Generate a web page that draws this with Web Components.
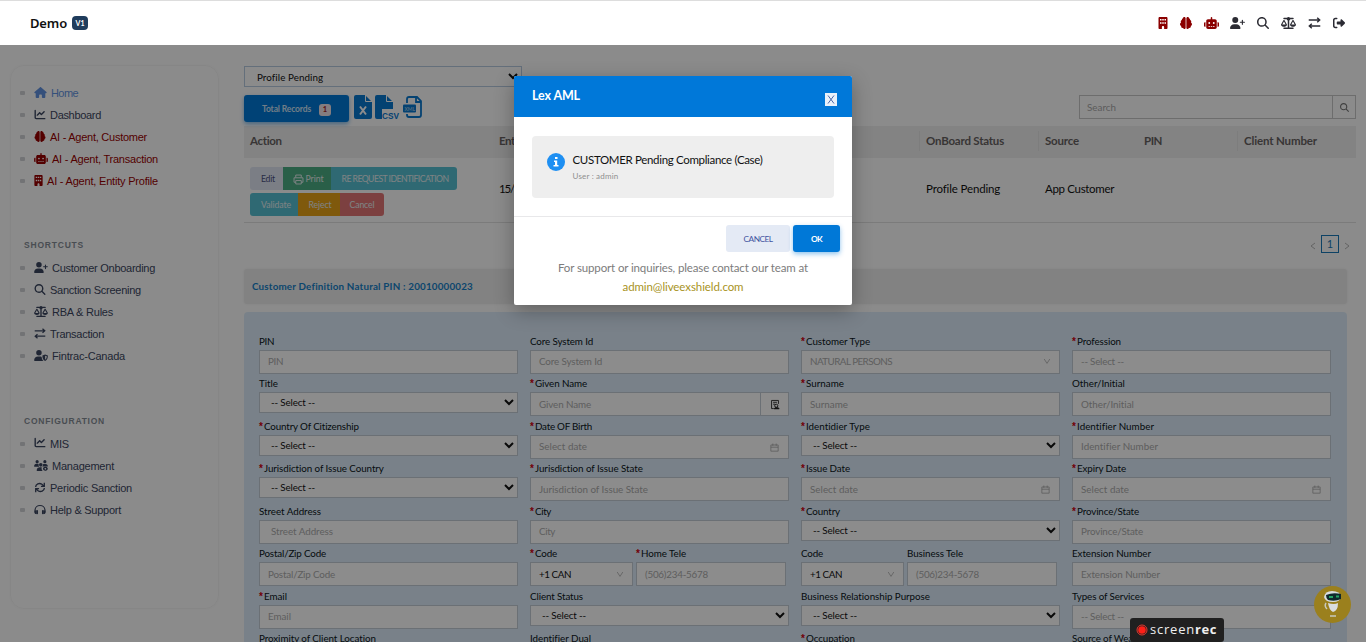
<!DOCTYPE html>
<html lang="en">
<head>
<meta charset="utf-8">
<title>Demo</title>
<style>
  html, body { margin:0; height:642px; overflow:hidden; background:#fff }
  body { font-family:Lato, Carlito, sans-serif; font-size:9.8px; color:#111 }
</style>
</head>
<body>
<aml-app></aml-app>
<script>
const ICONS = {
  home: ['0 0 576 512', '<path d="M576 255.500c0 18-15 32-32 32h-32l.7 160c0 3-.2 6-.5 8v16c0 22-18 40-40 40h-80c-22 0-40-18-40-40v-88c0-18-14-32-32-32h-64c-18 0-32 14-32 32v88c0 22-18 40-40 40h-80c-22 0-40-18-40-40V287.600H32c-18 0-32-14-32-32 0-9 3-17 10-24L266 8c7-7 15-8 22-8s15 2 21 7l256 224.500c8 7 12 15 11 24z"/>'],
  chart: ['0 0 512 512', '<path d="M64 64c0-17.700-14.300-32-32-32S0 46.300 0 64V400c0 44.200 35.800 80 80 80H480c17.700 0 32-14.300 32-32s-14.300-32-32-32H80c-8.800 0-16-7.200-16-16V64zm406.600 86.600c12.500-12.500 12.500-32.800 0-45.300s-32.800-12.500-45.300 0L320 210.700l-57.400-57.400c-12.500-12.500-32.800-12.500-45.300 0l-112 112c-12.500 12.500-12.500 32.800 0 45.300s32.800 12.500 45.300 0L240 221.300l57.400 57.400c12.500 12.500 32.800 12.500 45.300 0l128-128z"/>'],
  brain: ['0 0 512 512', '<path d="M184 0c30.900 0 56 25.100 56 56V456c0 30.900-25.100 56-56 56c-28.900 0-52.700-21.900-55.700-50.100c-5.200 1.400-10.700 2.100-16.300 2.100c-35.300 0-64-28.700-64-64c0-7.400 1.300-14.600 3.600-21.200C21.400 367.400 0 338.200 0 304c0-31.900 18.700-59.500 45.800-72.300C37.100 220.800 32 207 32 192c0-30.700 21.600-56.300 50.400-62.600C80.800 123.900 80 118 80 112c0-29.900 20.600-55.100 48.300-62.100C131.300 21.900 155.100 0 184 0zM328 0c28.900 0 52.600 21.900 55.700 49.900c27.800 7 48.300 32.100 48.300 62.100c0 6-.8 11.900-2.400 17.400c28.800 6.200 50.400 31.900 50.400 62.600c0 15-5.100 28.800-13.800 39.700C493.300 244.500 512 272.100 512 304c0 34.200-21.400 63.400-51.600 74.800c2.300 6.600 3.600 13.800 3.600 21.200c0 35.300-28.700 64-64 64c-5.600 0-11.100-.7-16.300-2.100c-3 28.200-26.800 50.100-55.700 50.100c-30.900 0-56-25.100-56-56V56c0-30.900 25.100-56 56-56z"/>'],
  robot: ['0 0 640 512', '<path fill-rule="evenodd" d="M320 0c17.700 0 32 14.300 32 32V96H472c39.800 0 72 32.200 72 72V440c0 39.800-32.200 72-72 72H168c-39.800 0-72-32.200-72-72V168c0-39.800 32.200-72 72-72H288V32c0-17.700 14.300-32 32-32zM192 384h64v32h-64zM288 384h64v32h-64zM384 384h64v32h-64zM264 256a40 40 0 1 0-80 0 40 40 0 1 0 80 0zm152 40a40 40 0 1 0 0-80 40 40 0 1 0 0 80zM48 224H64V416H48c-26.500 0-48-21.500-48-48V272c0-26.500 21.500-48 48-48zm544 0c26.500 0 48 21.500 48 48v96c0 26.500-21.500 48-48 48H576V224h16z"/>'],
  building: ['0 0 384 512', '<path fill-rule="evenodd" d="M48 0C21.500 0 0 21.500 0 48V464c0 26.500 21.500 48 48 48h96V432c0-26.500 21.500-48 48-48s48 21.500 48 48v80h96c26.500 0 48-21.500 48-48V48c0-26.500-21.500-48-48-48H48zM64 80h64v64H64zM160 80h64v64h-64zM256 80h64v64h-64zM64 224h64v64H64zM160 224h64v64h-64zM256 224h64v64h-64z"/>'],
  userplus: ['0 0 640 512', '<path d="M96 128a128 128 0 1 1 256 0A128 128 0 1 1 96 128zM0 482.300C0 383.800 79.800 304 178.300 304h91.400C368.200 304 448 383.800 448 482.300c0 16.400-13.300 29.700-29.700 29.700H29.700C13.300 512 0 498.700 0 482.300zM504 312V248H440c-13.300 0-24-10.700-24-24s10.700-24 24-24h64V136c0-13.300 10.700-24 24-24s24 10.700 24 24v64h64c13.300 0 24 10.700 24 24s-10.700 24-24 24H552v64c0 13.300-10.700 24-24 24s-24-10.700-24-24z"/>'],
  search: ['0 0 512 512', '<path d="M416 208c0 45.900-14.900 88.300-40 122.700L502.600 457.400c12.500 12.500 12.500 32.800 0 45.300s-32.800 12.500-45.300 0L330.700 376c-34.400 25.200-76.800 40-122.700 40C93.100 416 0 322.900 0 208S93.100 0 208 0S416 93.100 416 208zM208 352a144 144 0 1 0 0-288 144 144 0 1 0 0 288z"/>'],
  scale: ['0 0 640 512', '<path d="M384 32H512c17.700 0 32 14.300 32 32s-14.300 32-32 32H398.400c-5.200 25.800-22.900 47.100-46.400 57.300V448H512c17.700 0 32 14.300 32 32s-14.300 32-32 32H128c-17.700 0-32-14.300-32-32s14.300-32 32-32H288V153.300c-23.500-10.300-41.200-31.600-46.400-57.300H128c-17.700 0-32-14.300-32-32s14.300-32 32-32H256c14.600-19.400 37.800-32 64-32s49.400 12.600 64 32zm55.600 288H584.400L512 195.800 439.600 320zM512 416c-62.900 0-115.200-34-126-78.900c-2.600-11 1-22.300 6.700-32.100l95.200-163.200c5-8.600 14.200-13.800 24.100-13.800s19.100 5.300 24.100 13.800l95.200 163.200c5.700 9.800 9.300 21.100 6.700 32.100C627.200 382 574.900 416 512 416zM126.800 195.800L54.400 320H199.300L126.800 195.800zM.9 337.100c-2.600-11 1-22.300 6.700-32.100l95.200-163.200c5-8.600 14.200-13.800 24.100-13.800s19.100 5.300 24.100 13.800l95.200 163.200c5.700 9.800 9.300 21.100 6.700 32.100C242 382 189.700 416 126.800 416S11.700 382 .9 337.100z"/>'],
  swap: ['0 0 512 512', '<path d="M10 130h466M372 34l106 96-106 96M502 382H36M140 286L34 382l106 96" fill="none" stroke="currentColor" stroke-width="60"/>'],
  exit: ['0 0 512 512', '<path d="M377.900 105.900L500.700 228.700c15 15 15 39.600 0 54.600L377.900 406.100c-6.400 6.400-15 9.900-24 9.900c-18.700 0-33.900-15.200-33.900-33.900V320H192c-17.700 0-32-14.300-32-32v-64c0-17.700 14.300-32 32-32h128v-62.100c0-18.700 15.200-33.900 33.900-33.900c9 0 17.600 3.600 24 9.900zM160 96H96c-17.700 0-32 14.300-32 32v256c0 17.700 14.300 32 32 32h64c17.700 0 32 14.300 32 32s-14.300 32-32 32H96c-53 0-96-43-96-96V128C0 75 43 32 96 32h64c17.700 0 32 14.300 32 32s-14.300 32-32 32z"/>'],
  shield: ['0 0 640 512', '<path d="M96 128a128 128 0 1 1 256 0A128 128 0 1 1 96 128zM0 482C0 384 80 304 178 304h92c30 0 58 7 82 20 2 72 34 136 84 188H30c-17 0-30-13-30-30z"/><path fill-rule="evenodd" d="M512 208l128 50c0 110-24 200-128 254-104-54-128-144-128-254zM512 262v192c56-38 76-90 78-162z"/>'],
  team: ['0 0 640 512', '<circle cx="140" cy="76" r="74"/><circle cx="500" cy="76" r="74"/><circle cx="310" cy="226" r="84"/><path d="M0 300c0-70 40-122 104-122h54c20 0 38 6 54 16-10 46 0 86 28 118H12zM420 190h116c62 0 104 50 104 118H376c32-34 48-70 44-118zM120 484c0-88 64-146 150-146h88c-22 60-8 124 42 174H150c-18 0-30-12-30-28z"/><path fill-rule="evenodd" d="M494 324l28-24 30 24 38-8 12 38 36 14-8 36 8 36-36 16-12 36-38-8-30 26-28-26-38 8-12-36-36-16 10-36-10-36 36-14 12-38zM522 368a36 36 0 1 0 .1 0z"/>'],
  rotate: ['0 0 512 512', '<path d="M52 236C58 100 220 20 346 104l80 76M460 276c-6 136-168 216-294 132l-80-76M456 40v160H300M56 472V312h156" fill="none" stroke="currentColor" stroke-width="62"/>'],
  phones: ['0 0 512 512', '<path d="M28 400V276C28 0 484 0 484 276v124" fill="none" stroke="currentColor" stroke-width="54"/><rect x="76" y="284" width="88" height="196" rx="36"/><rect x="348" y="284" width="88" height="196" rx="36"/><path d="M0 300l76 6v160C20 456 0 420 0 390zM512 300l-76 6v160c56-10 76-46 76-76z"/>'],
  printer: ['0 0 16 16', '<path d="M4 5V1.500h8V5M4 12H1.500V5.500h13V12H12M4 9.500h8v5H4z" fill="none" stroke="currentColor" stroke-width="1.400"/>'],
  calendar: ['0 0 16 16', '<path d="M1.500 3.500h13v11h-13zM1.500 7.500h13M5 1v4M11 1v4" fill="none" stroke="currentColor" stroke-width="1.200"/>'],
  lookup: ['0 0 16 16', '<path d="M6 14.500H2.500v-13h11V7M5 4.500h6M5 7.500h3" fill="none" stroke="currentColor" stroke-width="1.400"/><circle cx="10" cy="10" r="2.500" fill="none" stroke="currentColor" stroke-width="1.500"/><path d="M6.500 15c1-3 6-3 8 0zM12 12l3 3" stroke="currentColor"/>'],
  down: ['0 0 10 10', '<path d="M1.500 2.500L5 8l3.500-5.500" fill="none" stroke="currentColor"/>'],
  caret: ['0 0 10 10', '<path d="M1 3l4 4 4-4" fill="none" stroke="currentColor" stroke-width="2"/>']
}

customElements.define('aml-icon', class extends HTMLElement {
  connectedCallback() {
    const [box, body] = ICONS[this.getAttribute('name')]
    const w = this.getAttribute('w') || 12
    const h = this.getAttribute('h') || 12
    this.attachShadow({ mode: 'open' }).innerHTML = `
    <style>
      :host{display:inline-flex;flex:none}
      svg{display:block;fill:currentColor}
    </style>
    <svg width='${w}' height='${h}' viewBox='${box}'>${body}</svg>`
  }
})

// one line of text, tracked so that it runs over w pixels
customElements.define('aml-text', class extends HTMLElement {
  connectedCallback() {
    this.attachShadow({ mode: 'open' }).innerHTML =
      `<style>:host{display:inline-block;white-space:nowrap;flex:none}</style><span><slot></slot></span>`
    const w = +this.getAttribute('w')
    if (!w) return
    const own = this.shadowRoot.querySelector('span').getBoundingClientRect().width
    this.style.letterSpacing = (w - own) / this.textContent.length + 'px'
  }
})

customElements.define('aml-topbar', class extends HTMLElement {
  connectedCallback() {
    const icons = [['building', 10, 12, 6], ['brain', 12, 12, 12], ['robot', 15, 12, 12], ['userplus', 15, 12, 12],
      ['search', 12, 12, 12], ['scale', 15, 12, 12], ['swap', 13, 12, 12], ['exit', 12, 12, 11]]
    this.attachShadow({ mode: 'open' }).innerHTML = `
    <style>
      :host{
        display:flex;
        align-items:center;
        box-sizing:border-box;
        height:45px;
        padding:0 21px 1px 30px;
        border-top:1px solid #ddd;
        background:#fff;
        color:#2b2b33;
      }
      .name{font:600 13px "Noto Sans",sans-serif;color:#111}
      .tag{
        width:16px;height:14px;margin-left:5px;border-radius:4px;
        background:#1f3c5c;color:#fff;
        font:bold 7px/14px Lato,sans-serif;text-align:center;
      }
      nav{display:flex;align-items:center;margin-left:auto;gap:11.900px}
      nav aml-icon:nth-child(-n+3){color:#8b0000}
    </style>
    <aml-text class='name' w='37'>Demo</aml-text><span class='tag'>V1</span>
    <nav>${icons.map(([n, w, h]) => `<aml-icon name='${n}' w='${w}' h='${h}'></aml-icon>`).join('')}</nav>`
  }
})

customElements.define('aml-link', class extends HTMLElement {
  connectedCallback() {
    const wide = this.getAttribute('iw') || 12
    this.attachShadow({ mode: 'open' }).innerHTML = `
    <style>
      :host{display:flex;align-items:center;height:22.100px;padding-left:9px;color:#3b4660}
      :host([red]){color:#980000}
      :host([blue]){color:#6292e0}
      i{width:5px;height:4px;border-radius:1px;background:#d0d2d6;margin-right:9px}
      aml-icon{margin-right:4px;position:relative;top:-1px}
    </style>
    <i></i><aml-icon name='${this.getAttribute('icon')}' w='${wide}' h='${this.getAttribute('ih') || 11}'></aml-icon>
    <aml-text w='${this.getAttribute('w')}'>${this.textContent}</aml-text>`
  }
})

customElements.define('aml-sidebar', class extends HTMLElement {
  connectedCallback() {
    this.attachShadow({ mode: 'open' }).innerHTML = `
    <style>
      :host{
        display:block;box-sizing:border-box;
        width:209px;height:544px;margin:20px 0 0 10px;padding-top:16px;
        border:1px solid #f5f5f5;border-radius:14px;
        box-shadow:0 0 3px rgba(0,0,0,.04);
        font:11px "Liberation Sans",Arial,sans-serif;
        flex:none;
      }
      h4{
        height:12px;margin:46.500px 0 6px 13px;
        font-size:8.500px;line-height:12px;font-weight:bold;color:#868d96;
      }
      h4.second{margin-top:47.500px}
    </style>
    <aml-link icon='home' iw='13' w='27' blue>Home</aml-link>
    <aml-link icon='chart' w='51'>Dashboard</aml-link>
    <aml-link icon='brain' w='97' red>AI - Agent, Customer</aml-link>
    <aml-link icon='robot' iw='14' w='106' red>AI - Agent, Transaction</aml-link>
    <aml-link icon='building' iw='9' w='111' red>AI - Agent, Entity Profile</aml-link>
    <h4><aml-text w='60'>SHORTCUTS</aml-text></h4>
    <aml-link icon='userplus' iw='14' w='103'>Customer Onboarding</aml-link>
    <aml-link icon='search' w='91'>Sanction Screening</aml-link>
    <aml-link icon='scale' iw='14' w='61'>RBA &amp; Rules</aml-link>
    <aml-link icon='swap' w='54'>Transaction</aml-link>
    <aml-link icon='shield' iw='14' w='73'>Fintrac-Canada</aml-link>
    <h4 class='second'><aml-text w='81'>CONFIGURATION</aml-text></h4>
    <aml-link icon='chart' w='19'>MIS</aml-link>
    <aml-link icon='team' iw='14' w='62'>Management</aml-link>
    <aml-link icon='rotate' w='82'>Periodic Sanction</aml-link>
    <aml-link icon='phones' w='71'>Help &amp; Support</aml-link>`
  }
})

customElements.define('aml-records', class extends HTMLElement {
  connectedCallback() {
    this.attachShadow({ mode: 'open' }).innerHTML = `
    <style>
      :host{display:block;width:1112px;height:203px}
      *{box-sizing:border-box}
      .status{
        display:flex;align-items:center;justify-content:space-between;
        width:278px;height:21px;padding:0 3px 0 12px;
        border:1px solid #b6cbe0;color:#111;
      }
      .status aml-icon{margin-bottom:2px}
      .tools{display:flex;align-items:flex-start;height:31px;margin-top:8px}
      .total{
        display:flex;align-items:center;width:105px;height:27px;padding-left:18px;
        border-radius:3px;background:#0078d7;color:#cfe3f5;font-weight:bold;
        box-shadow:0 2px 4px rgba(0,120,215,.5);margin-right:5px;font-size:8.500px;
      }
      .total b{
        width:12px;height:12px;margin:2px 0 0 8px;border-radius:3px;text-align:center;
        background:#f3e4e8;color:#a32b2b;font-size:7.500px;line-height:12px;
      }
      .files{display:block}
      .search{display:flex;width:277px;height:24px;margin-left:auto;border:1px solid #c6c6c6;color:#a8a8a8;align-items:center}
      .search aml-text{padding:0 0 1px 7px}
      .search div{
        display:flex;align-items:center;justify-content:center;width:23px;height:22px;
        margin-left:auto;border-left:1px solid #c6c6c6;color:#777;
      }
      .row{display:grid;grid-template-columns:249px 426px 119px 99px 100px 1fr;align-items:center;font-size:11.500px}
      .row > *{padding-left:6px}
      .head{height:32px;padding-bottom:3px;background:#efefef;font-weight:bold;color:#676262}
      .sep{height:20px;border-left:1px solid #e4e4e4;display:flex;align-items:center}
      .body{height:65px;border-bottom:1px solid #e0e0e0;color:#111}
      .body > span{padding-bottom:4px}
      .actions{display:grid;gap:3px;padding-top:2px}
      .group{display:flex;height:23px;font-size:8.700px;color:#e6eef0}
      .group span{display:flex;align-items:center;justify-content:center;gap:2px;background:#57c0d2}
      .group span:first-child{border-radius:3px 0 0 3px}
      .group span:last-child{border-radius:0 3px 3px 0}
      .group .edit{background:#e0e6f3;color:#4a5080}
      .group .print{background:#4cad83}
      .group .print aml-icon{position:relative;top:1px}
      .group .reject{background:#e8a317}
      .group .cancel{background:#e27676}
      .pages{
        display:flex;justify-content:flex-end;align-items:center;gap:5px;
        height:43px;padding:0 6px 2px 0;color:#b5b5b5;
      }
      .pages svg{position:relative;top:2px}
      .pages b{
        width:18px;height:18px;border:1px solid #1878b8;
        color:#1878b8;text-align:center;font-size:11px;line-height:16px;font-weight:normal;
      }
    </style>
    <div class='status'><aml-text w='66'>Profile Pending</aml-text><aml-icon name='caret' w='10' h='10'></aml-icon></div>
    <div class='tools'>
      <div class='total'><aml-text w='49'>Total Records</aml-text><b>1</b></div>
      <svg class='files' width='70' height='26' viewBox='0 0 70 26'>
        <g fill='#0878d0'>
          <path d='M2 0h9l7 7v15q0 2-2 2H2q-2 0-2-2V2q0-2 2-2z'/>
          <path d='M23 0h9l7 7v7H28v10h-5q-2 0-2-2V2q0-2 2-2z'/>
        </g>
        <path d='M11.500 0v6.500H18M32.500 0v6.500H39' fill='none' stroke='#fff'/>
        <path d='M6 11.500l6 8M12 11.500l-6 8' stroke='#fff' stroke-width='2'/>
        <text x='28' y='24' font-family='Liberation Sans' font-size='9' font-weight='bold' fill='#0878d0' textLength='17' lengthAdjust='spacingAndGlyphs'>CSV</text>
        <path d='M53 8V4q0-2 2-2h8l4 4v14q0 2-2 2H55q-2 0-2-2v-1M62 2v5h5' fill='none' stroke='#0878d0' stroke-width='1.800'/>
        <rect x='49' y='9.500' width='13' height='8' rx='1' fill='#0878d0'/>
        <text x='50.500' y='15.500' font-family='Lato' font-size='5' font-weight='bold' fill='#9cc4e4'>XML</text>
      </svg>
      <div class='search'><aml-text w='29'>Search</aml-text><div><aml-icon name='search' w='9' h='9'></aml-icon></div></div>
    </div>
    <div class='row head'>
      <span><aml-text w='32'>Action</aml-text></span><span><aml-text w='16'>Ent</aml-text></span>
      <div class='sep'><aml-text w='78'>OnBoard Status</aml-text></div>
      <div class='sep'><aml-text w='34'>Source</aml-text></div>
      <span style='padding-left:7px'><aml-text w='18'>PIN</aml-text></span>
      <div class='sep'><aml-text w='73'>Client Number</aml-text></div>
    </div>
    <div class='row body'>
      <div class='actions'>
        <div class='group'>
          <span class='edit' style='width:33px;padding-left:3px'><aml-text w='14'>Edit</aml-text></span>
          <span class='print' style='width:48px;padding-left:2px'><aml-icon name='printer' w='11' h='11'></aml-icon><aml-text w='18'>Print</aml-text></span>
          <span style='width:126px;padding-left:2px'><aml-text w='107'>RE REQUEST IDENTIFICATION</aml-text></span>
        </div>
        <div class='group'>
          <span style='width:48px;padding-left:4px'><aml-text w='30'>Validate</aml-text></span>
          <span class='reject' style='width:42px;padding-left:2px'><aml-text w='23'>Reject</aml-text></span>
          <span class='cancel' style='width:44px'><aml-text w='25'>Cancel</aml-text></span>
        </div>
      </div>
      <span><aml-text w='15'>15/</aml-text></span>
      <span style='padding-left:7px'><aml-text w='74'>Profile Pending</aml-text></span>
      <span style='padding-left:7px'><aml-text w='69'>App Customer</aml-text></span>
    </div>
    <div class='pages'>
      <svg width='6' height='8'><path d='M5 1L1 4l4 3' fill='none' stroke='#b5b5b5'/></svg><b>1</b><svg width='6' height='8'><path d='M1 1l4 3-4 3' fill='none' stroke='#b5b5b5'/></svg>
    </div>`
  }
})

// kind: input, select (native look), combo (thin arrow), date, lookup
customElements.define('aml-field', class extends HTMLElement {
  connectedCallback() {
    const kind = this.getAttribute('kind') || 'input'
    const icon = {
      select: `<aml-icon name='caret' w='10' h='10'></aml-icon>`,
      combo: `<aml-icon name='down' w='8' h='8'></aml-icon>`,
      date: `<aml-icon name='calendar' w='9' h='9'></aml-icon>`,
      lookup: `<div><aml-icon name='lookup' w='10' h='11'></aml-icon></div>`
    }[kind] || ''
    this.attachShadow({ mode: 'open' }).innerHTML = `
    <style>
      :host{display:block;height:42.500px}
      *{box-sizing:border-box}
      label{display:flex;height:18px;line-height:18px;color:#0b1420}
      sup{width:5px;height:18px;font:bold 10px/20px "Liberation Sans",sans-serif;color:#d00010}
      .box{
        display:flex;align-items:center;height:24px;padding:0 0 1px 8px;
        border:1px solid #c3cdd6;background:#fff;color:#acacac;
      }
      .box > aml-icon{margin-left:auto;margin-right:8px}
      .select{height:21px;padding-left:11px;color:#111}
      .select > aml-icon{margin-right:3px}
      .date > aml-icon{margin-right:9px;color:#999;position:relative;top:1px}
      :host([dark]) .box aml-text{color:#111}
      .box div{
        display:flex;align-items:center;justify-content:center;width:28px;height:22px;
        margin-left:auto;border-left:1px solid #c3cdd6;color:#222;position:relative;top:.5px;
      }
    </style>
    <label>${this.hasAttribute('req') ? '<sup>*</sup>' : ''}<aml-text w='${this.getAttribute('lw')}'>${this.getAttribute('label')}</aml-text></label>
    <div class='box ${kind}' ${this.hasAttribute('inset') ? `style='padding-left:11px'` : ''}><aml-text w='${this.getAttribute('w')}'>${this.getAttribute('text')}</aml-text>${icon}</div>`
  }
})

customElements.define('aml-form', class extends HTMLElement {
  connectedCallback() {
    // label, label width, required, kind, text, text width
    const S = ['select', '-- Select --', 44]
    const D = ['date', 'Select date', 48]
    const f = (label, lw, req, kind, text, w, extra = '') =>
      `<aml-field label='${label}' lw='${lw}' ${req ? 'req' : ''} kind='${kind}' text='${text}' w='${w}' ${extra}></aml-field>`
    // the last row is a strip of labels, its boxes are below the fold
    const last = (label, lw, req) => f(label, lw, req, 'select', '', 0)
    const rows = [
      f('PIN', 15, 0, 'input', 'PIN', 15),
      f('Core System Id', 63, 0, 'input', 'Core System Id', 63),
      f('Customer Type', 64, 1, 'combo', 'NATURAL PERSONS', 82),
      f('Profession', 44, 1, 'input', '-- Select --', 43),
      f('Title', 19, 0, ...S),
      f('Given Name', 52, 1, 'lookup', 'Given Name', 52),
      f('Surname', 38, 1, 'input', 'Surname', 38),
      f('Other/Initial', 53, 0, 'input', 'Other/Initial', 53),
      f('Country Of Citizenship', 95, 1, ...S),
      f('Date OF Birth', 57, 1, ...D),
      f('Identidier Type', 64, 1, ...S),
      f('Identifier Number', 77, 1, 'input', 'Identifier Number', 77),
      f('Jurisdiction of Issue Country', 120, 1, ...S),
      f('Jurisdiction of Issue State', 108, 1, 'input', 'Jurisdiction of Issue State', 109),
      f('Issue Date', 44, 1, ...D),
      f('Expiry Date', 49, 1, ...D),
      f('Street Address', 62, 0, 'input', 'Street Address', 62, 'inset'),
      f('City', 16, 1, 'input', 'City', 16),
      f('Country', 34, 1, ...S),
      f('Province/State', 62, 1, 'input', 'Province/State', 62),
      f('Postal/Zip Code', 67, 0, 'input', 'Postal/Zip Code', 67),
      `<div class='phone'>${f('Code', 22, 1, 'combo', '+1 CAN', 32, 'dark')}${f('Home Tele', 45, 1, 'input', '(506)234-5678', 63)}</div>`,
      `<div class='phone'>${f('Code', 22, 0, 'combo', '+1 CAN', 32, 'dark')}${f('Business Tele', 56, 0, 'input', '(506)234-5678', 63)}</div>`,
      f('Extension Number', 79, 0, 'input', 'Extension Number', 79),
      f('Email', 23, 1, 'input', 'Email', 23),
      f('Client Status', 53, 0, ...S),
      f('Business Relationship Purpose', 129, 0, ...S),
      f('Types of Services', 72, 0, 'input', '-- Select --', 43),
      last('Proximity of Client Location', 117, 0),
      last('Identifier Dual', 61, 0),
      last('Occupation', 49, 1),
      last('Source of Wealth', 72, 0)
    ]
    this.attachShadow({ mode: 'open' }).innerHTML = `
    <style>
      :host{display:block;width:1103px}
      h3{
        display:flex;align-items:center;height:35px;margin:0 0 8px;padding:0 0 1px 8px;
        box-sizing:border-box;border-radius:3px;background:#ededed;
        box-shadow:0 0 3px rgba(0,0,0,.08);
        font-size:9.800px;color:#1580c8;
      }
      .grid{
        display:grid;grid-template-columns:repeat(4,259px);column-gap:12px;
        grid-auto-rows:42.500px;height:342px;padding:19.800px 15px 0;
        border-radius:4px 4px 0 0;background:#dcecf9;
      }
      .phone{display:grid;grid-template-columns:103px 150px;column-gap:3px}
    </style>
    <h3><aml-text w='221'>Customer Definition Natural PIN : 20010000023</aml-text></h3>
    <div class='grid'>${rows.join('')}</div>`
  }
})

customElements.define('aml-dialog', class extends HTMLElement {
  connectedCallback() {
    this.attachShadow({ mode: 'open' }).innerHTML = `
    <style>
      :host{
        display:block;position:absolute;left:514px;top:76px;width:338px;height:229px;
        background:#fff;border-radius:2px;box-shadow:0 6px 20px rgba(0,0,0,.3);
      }
      *{box-sizing:border-box}
      header{
        display:flex;justify-content:space-between;height:41px;padding:12px 15px 0 18px;
        background:#0078d9;border-radius:2px 2px 0 0;color:#fff;font-size:12.500px;font-weight:bold;
      }
      header i{
        display:flex;align-items:center;justify-content:center;
        width:12px;height:13px;margin-top:5px;background:#e9f1fa;color:#4a67a8;
      }
      .info{
        display:flex;height:62px;margin:19px 18px 18px;padding:17px 15px;
        background:#eee;border-radius:4px;
      }
      .info > svg{display:block;margin-right:7.500px;flex:none}
      .case{font-size:11.500px;color:#111;line-height:14px}
      .user{font-size:8px;color:#8e8e8e;line-height:10px;margin-top:4px}
      .buttons{display:flex;justify-content:flex-end;gap:3px;padding:8px 12px 6px;border-top:1px solid #e8e8ea}
      .buttons span{
        display:flex;align-items:center;justify-content:center;height:27px;border-radius:3px;
        font-size:8.300px;
      }
      .no{width:64px;background:#e4eaf5;color:#3f54a0}
      .yes{width:47px;background:#0078d7;color:#fff;font-weight:bold;box-shadow:0 2px 5px rgba(0,120,215,.45)}
      p{margin:0;text-align:center;font-size:11.500px;line-height:19px;color:#7c7c7c}
      .mail{color:#a8931d}
    </style>
    <header><aml-text w='48'>Lex AML</aml-text><i><svg width='8' height='9'><path d='M1 .5l6 8M7 .5l-6 8' stroke='currentColor'/></svg></i></header>
    <div class='info'>
      <svg width='18' height='18'><circle cx='9' cy='9' r='9' fill='#1e8ff2'/><path d='M8 4h2.500v2H8zM7 7.500h3.200V12H11.500v1.500H6.500V12H8V9H7z' fill='#fff'/></svg>
      <div><div class='case'><aml-text w='190'>CUSTOMER Pending Compliance (Case)</aml-text></div><div class='user'><aml-text w='46'>User : admin</aml-text></div></div>
    </div>
    <div class='buttons'><span class='no'><aml-text w='29'>CANCEL</aml-text></span><span class='yes'><aml-text w='11'>OK</aml-text></span></div>
    <p><aml-text w='250'>For support or inquiries, please contact our team at</aml-text></p>
    <p class='mail'><aml-text w='121'>admin@liveexshield.com</aml-text></p>`
  }
})

customElements.define('aml-floats', class extends HTMLElement {
  connectedCallback() {
    this.attachShadow({ mode: 'open' }).innerHTML = `
    <style>
      :host{display:block}
      .bot{position:absolute;left:1314px;top:586px}
      .rec{
        position:absolute;left:1130px;top:618px;width:94px;height:24px;
        display:flex;align-items:center;box-sizing:border-box;padding:0 0 2px 6px;
        background:#202020;border-radius:3px;color:#eee;
        font:13px/18px "Open Sans",sans-serif;
      }
      .rec svg{margin-right:2px;flex:none;position:relative;top:1px}
      .rec b{font-weight:bold}
    </style>
    <svg class='bot' width='37' height='37' viewBox='0 0 37 37'>
      <circle cx='18.500' cy='18.500' r='18.500' fill='#9b801d'/>
      <path d='M10 11q1-6 8-6 8 0 9 6-1 5-8 5-8 0-9-5z' fill='#d9dde0'/>
      <path d='M12 9q7-3 15-1v5q-6 3-13 1-2-2-2-5z' fill='#102a2c'/>
      <path d='M15 11h4M22 10.500h3' stroke='#22a565' stroke-width='2'/>
      <path d='M14 17q6 2 10 0 0 8-5 9-4-2-5-9z' fill='#dadddf'/>
      <path d='M12 17q-2 3 1 6M16 30h6' fill='none' stroke='#c8c9bd' stroke-width='1.500'/>
    </svg>
    <div class='rec'>
      <svg width='12' height='12'><circle cx='6' cy='6' r='5' fill='none' stroke='#e8392e'/><circle cx='6' cy='6' r='3.800' fill='#ff1f17'/></svg>
      <aml-text w='45'>screen</aml-text><b><aml-text w='22'>rec</aml-text></b>
    </div>`
  }
})

customElements.define('aml-app', class extends HTMLElement {
  connectedCallback() {
    this.attachShadow({ mode: 'open' }).innerHTML = `
    <style>
      :host{display:block;position:relative;width:1366px;height:642px;overflow:hidden}
      .page{display:flex;height:597px;background:#fefefe}
      main{margin:21px 0 0 25px}
      .shade{position:absolute;left:0;top:45px;right:0;bottom:0;background:rgba(0,0,0,.45)}
    </style>
    <aml-topbar></aml-topbar>
    <div class='page'>
      <aml-sidebar></aml-sidebar>
      <main><aml-records></aml-records><aml-form></aml-form></main>
    </div>
    <div class='shade'></div>
    <aml-dialog></aml-dialog>
    <aml-floats></aml-floats>`
  }
})
</script>
</body>
</html>
